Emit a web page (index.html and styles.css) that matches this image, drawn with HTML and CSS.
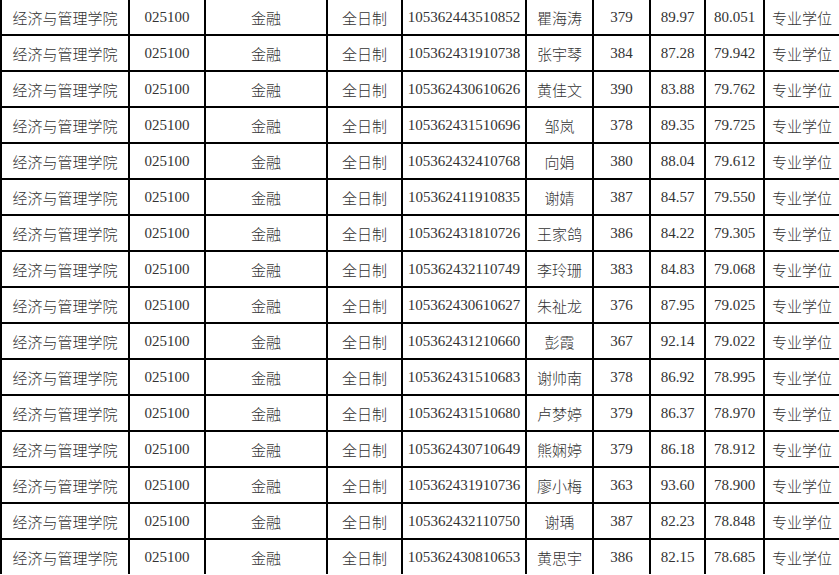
FILE: index.html
```html
<!DOCTYPE html>
<html lang="zh">
<head>
<meta charset="utf-8">
<title>录取名单</title>
<link rel="stylesheet" href="styles.css">
</head>
<body>
<table class="list">
<colgroup>
<col class="c-school"><col class="c-code"><col class="c-major"><col class="c-mode"><col class="c-id"><col class="c-name"><col class="c-score"><col class="c-re"><col class="c-total"><col class="c-type">
</colgroup>
<tbody>
<tr><td>经济与管理学院</td><td>025100</td><td>金融</td><td>全日制</td><td>105362443510852</td><td>瞿海涛</td><td>379</td><td>89.97</td><td>80.051</td><td>专业学位</td></tr>
<tr><td>经济与管理学院</td><td>025100</td><td>金融</td><td>全日制</td><td>105362431910738</td><td>张宇琴</td><td>384</td><td>87.28</td><td>79.942</td><td>专业学位</td></tr>
<tr><td>经济与管理学院</td><td>025100</td><td>金融</td><td>全日制</td><td>105362430610626</td><td>黄佳文</td><td>390</td><td>83.88</td><td>79.762</td><td>专业学位</td></tr>
<tr><td>经济与管理学院</td><td>025100</td><td>金融</td><td>全日制</td><td>105362431510696</td><td>邹岚</td><td>378</td><td>89.35</td><td>79.725</td><td>专业学位</td></tr>
<tr><td>经济与管理学院</td><td>025100</td><td>金融</td><td>全日制</td><td>105362432410768</td><td>向娟</td><td>380</td><td>88.04</td><td>79.612</td><td>专业学位</td></tr>
<tr><td>经济与管理学院</td><td>025100</td><td>金融</td><td>全日制</td><td>105362411910835</td><td>谢婧</td><td>387</td><td>84.57</td><td>79.550</td><td>专业学位</td></tr>
<tr><td>经济与管理学院</td><td>025100</td><td>金融</td><td>全日制</td><td>105362431810726</td><td>王家鸽</td><td>386</td><td>84.22</td><td>79.305</td><td>专业学位</td></tr>
<tr><td>经济与管理学院</td><td>025100</td><td>金融</td><td>全日制</td><td>105362432110749</td><td>李玲珊</td><td>383</td><td>84.83</td><td>79.068</td><td>专业学位</td></tr>
<tr><td>经济与管理学院</td><td>025100</td><td>金融</td><td>全日制</td><td>105362430610627</td><td>朱祉龙</td><td>376</td><td>87.95</td><td>79.025</td><td>专业学位</td></tr>
<tr><td>经济与管理学院</td><td>025100</td><td>金融</td><td>全日制</td><td>105362431210660</td><td>彭霞</td><td>367</td><td>92.14</td><td>79.022</td><td>专业学位</td></tr>
<tr><td>经济与管理学院</td><td>025100</td><td>金融</td><td>全日制</td><td>105362431510683</td><td>谢帅南</td><td>378</td><td>86.92</td><td>78.995</td><td>专业学位</td></tr>
<tr><td>经济与管理学院</td><td>025100</td><td>金融</td><td>全日制</td><td>105362431510680</td><td>卢梦婷</td><td>379</td><td>86.37</td><td>78.970</td><td>专业学位</td></tr>
<tr><td>经济与管理学院</td><td>025100</td><td>金融</td><td>全日制</td><td>105362430710649</td><td>熊娴婷</td><td>379</td><td>86.18</td><td>78.912</td><td>专业学位</td></tr>
<tr><td>经济与管理学院</td><td>025100</td><td>金融</td><td>全日制</td><td>105362431910736</td><td>廖小梅</td><td>363</td><td>93.60</td><td>78.900</td><td>专业学位</td></tr>
<tr><td>经济与管理学院</td><td>025100</td><td>金融</td><td>全日制</td><td>105362432110750</td><td>谢瑀</td><td>387</td><td>82.23</td><td>78.848</td><td>专业学位</td></tr>
<tr><td>经济与管理学院</td><td>025100</td><td>金融</td><td>全日制</td><td>105362430810653</td><td>黄思宇</td><td>386</td><td>82.15</td><td>78.685</td><td>专业学位</td></tr>
</tbody>
</table>
</body>
</html>
```
FILE: styles.css
```css
html, body {
  margin: 0;
  padding: 0;
  background: #ffffff;
}

.list {
  border-collapse: collapse;
  table-layout: fixed;
  width: 839px;
  font-family: "Liberation Serif", "Noto Sans CJK SC", serif;
  font-size: 15px;
  font-weight: 300;
  color: #333333;
}

.list td {
  border: 2px solid #000;
  height: 34px;
  padding: 0;
  text-align: center;
  vertical-align: middle;
  white-space: nowrap;
  overflow: hidden;
}

.list tr:first-child td {
  border-top: none;
}

.list tr:last-child td {
  border-bottom: none;
}

.c-school { width: 128px; }
.c-code { width: 76px; }
.c-major { width: 122px; }
.c-mode { width: 75px; }
.c-id { width: 124px; }
.c-name { width: 67px; }
.c-score { width: 57px; }
.c-re { width: 55px; }
.c-total { width: 59px; }
.c-type { width: 76px; }
```
